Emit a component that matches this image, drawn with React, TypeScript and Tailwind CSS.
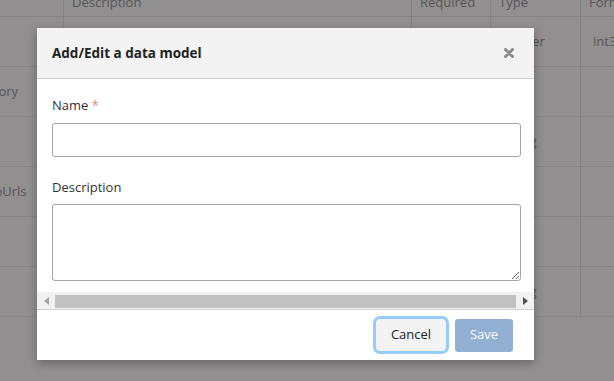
import React from 'react';

const rows = [
  { name: 'id', description: '', required: '', type: 'integer', format: 'int32' },
  { name: 'category', description: '', required: '', type: '', format: '' },
  { name: 'sku', description: '', required: '', type: 'string', format: '' },
  { name: 'photoUrls', description: '', required: '', type: 'array', format: '' },
  { name: 'tags', description: '', required: '', type: 'array', format: '' },
  { name: 'kind', description: '', required: '', type: 'string', format: '' },
];

function ModelTable() {
  return (
    <div className="-ml-[42px] -mt-[20px] text-[13px] text-[#575657]">
      <div className="flex h-[37px] border-b border-[#858384]">
        <div className="w-[105px] shrink-0" />
        <div className="w-[348px] shrink-0 border-l border-[#858384] px-2 pt-[13px]">Description</div>
        <div className="w-[79px] shrink-0 border-l border-[#858384] px-2 pt-[13px]">Required</div>
        <div className="w-[90px] shrink-0 border-l border-[#858384] px-2 pt-[13px]">Type</div>
        <div className="w-[120px] shrink-0 border-l border-[#858384] px-2 pt-[13px]">Format</div>
      </div>
      {rows.map((r) => (
        <div key={r.name} className="flex h-[50px] items-center border-b border-[#858384]">
          <div className="w-[105px] shrink-0 px-2">{r.name}</div>
          <div className="h-full w-[348px] shrink-0 border-l border-[#858384] px-2">{r.description}</div>
          <div className="h-full w-[79px] shrink-0 border-l border-[#858384] px-2">{r.required}</div>
          <div className="flex h-full w-[90px] shrink-0 items-center border-l border-[#858384] pl-[11px] pr-2">{r.type}</div>
          <div className="flex h-full w-[120px] shrink-0 items-center border-l border-[#858384] pl-[12px] pr-2">{r.format}</div>
        </div>
      ))}
    </div>
  );
}

function FakeScrollbar() {
  return (
    <div className="flex h-[17px] items-stretch bg-[#f1f1f1]">
      <div className="flex w-[18px] items-center justify-center">
        <svg width="5" height="8" viewBox="0 0 5 8">
          <path d="M5 0 L0 4 L5 8 Z" fill="#a3a3a3" />
        </svg>
      </div>
      <div className="mt-[3px] mb-[1px] flex-1 bg-[#c1c1c1]" />
      <div className="flex w-[18px] items-center justify-center">
        <svg width="5" height="8" viewBox="0 0 5 8">
          <path d="M0 0 L5 4 L0 8 Z" fill="#505050" />
        </svg>
      </div>
    </div>
  );
}

function ModelDialog() {
  return (
    <div className="absolute left-[37px] top-[28px] w-[497px] bg-white shadow-[0_3px_9px_rgba(0,0,0,0.3)]">
      <div className="flex h-[51px] items-center justify-between border-b border-[#d2d2d2] bg-[#f3f3f3] pl-[15px] pr-[17px]">
        <h4 className="text-[13.5px] font-bold text-[#222]">Add/Edit a data model</h4>
        <button className="flex h-4 w-4 items-center justify-center">
          <svg width="10" height="10" viewBox="0 0 10 10">
            <path d="M1.5 1.5 L8.5 8.5 M8.5 1.5 L1.5 8.5" stroke="#8a8a8a" strokeWidth="3" strokeLinecap="round" />
          </svg>
        </button>
      </div>

      <div className="px-[15px] pt-[16px] pb-[11px] text-[13px] text-[#333]">
        <label className="block leading-[20px]">
          Name <span className="text-[#ee8080]">*</span>
        </label>
        <input className="mt-[8px] block h-[34px] w-[469px] rounded-[3px] border border-[#a6a6a6] px-3 outline-none" />

        <label className="mt-[20px] block leading-[20px]">Description</label>
        <textarea className="mt-[7px] block h-[77px] w-[469px] rounded-[3px] border border-[#a6a6a6] px-3 py-2 outline-none" />
      </div>

      <FakeScrollbar />

      <div className="flex h-[51px] items-center justify-end gap-[9px] border-t border-[#cfcfcf] pr-[21px] text-[13px]">
        <button className="h-[32px] w-[70px] rounded-[4px] bg-[#f3f3f3] text-[#222] ring-[3px] ring-[#95cdfa]">Cancel</button>
        <button className="h-[33px] w-[58px] rounded-[3px] bg-[#92afd4] text-white">Save</button>
      </div>
    </div>
  );
}

export default function App() {
  return (
    <div className="relative h-[381px] w-[614px] overflow-hidden bg-[#928f90] font-['Open_Sans',sans-serif]">
      <ModelTable />
      <ModelDialog />
    </div>
  );
}
